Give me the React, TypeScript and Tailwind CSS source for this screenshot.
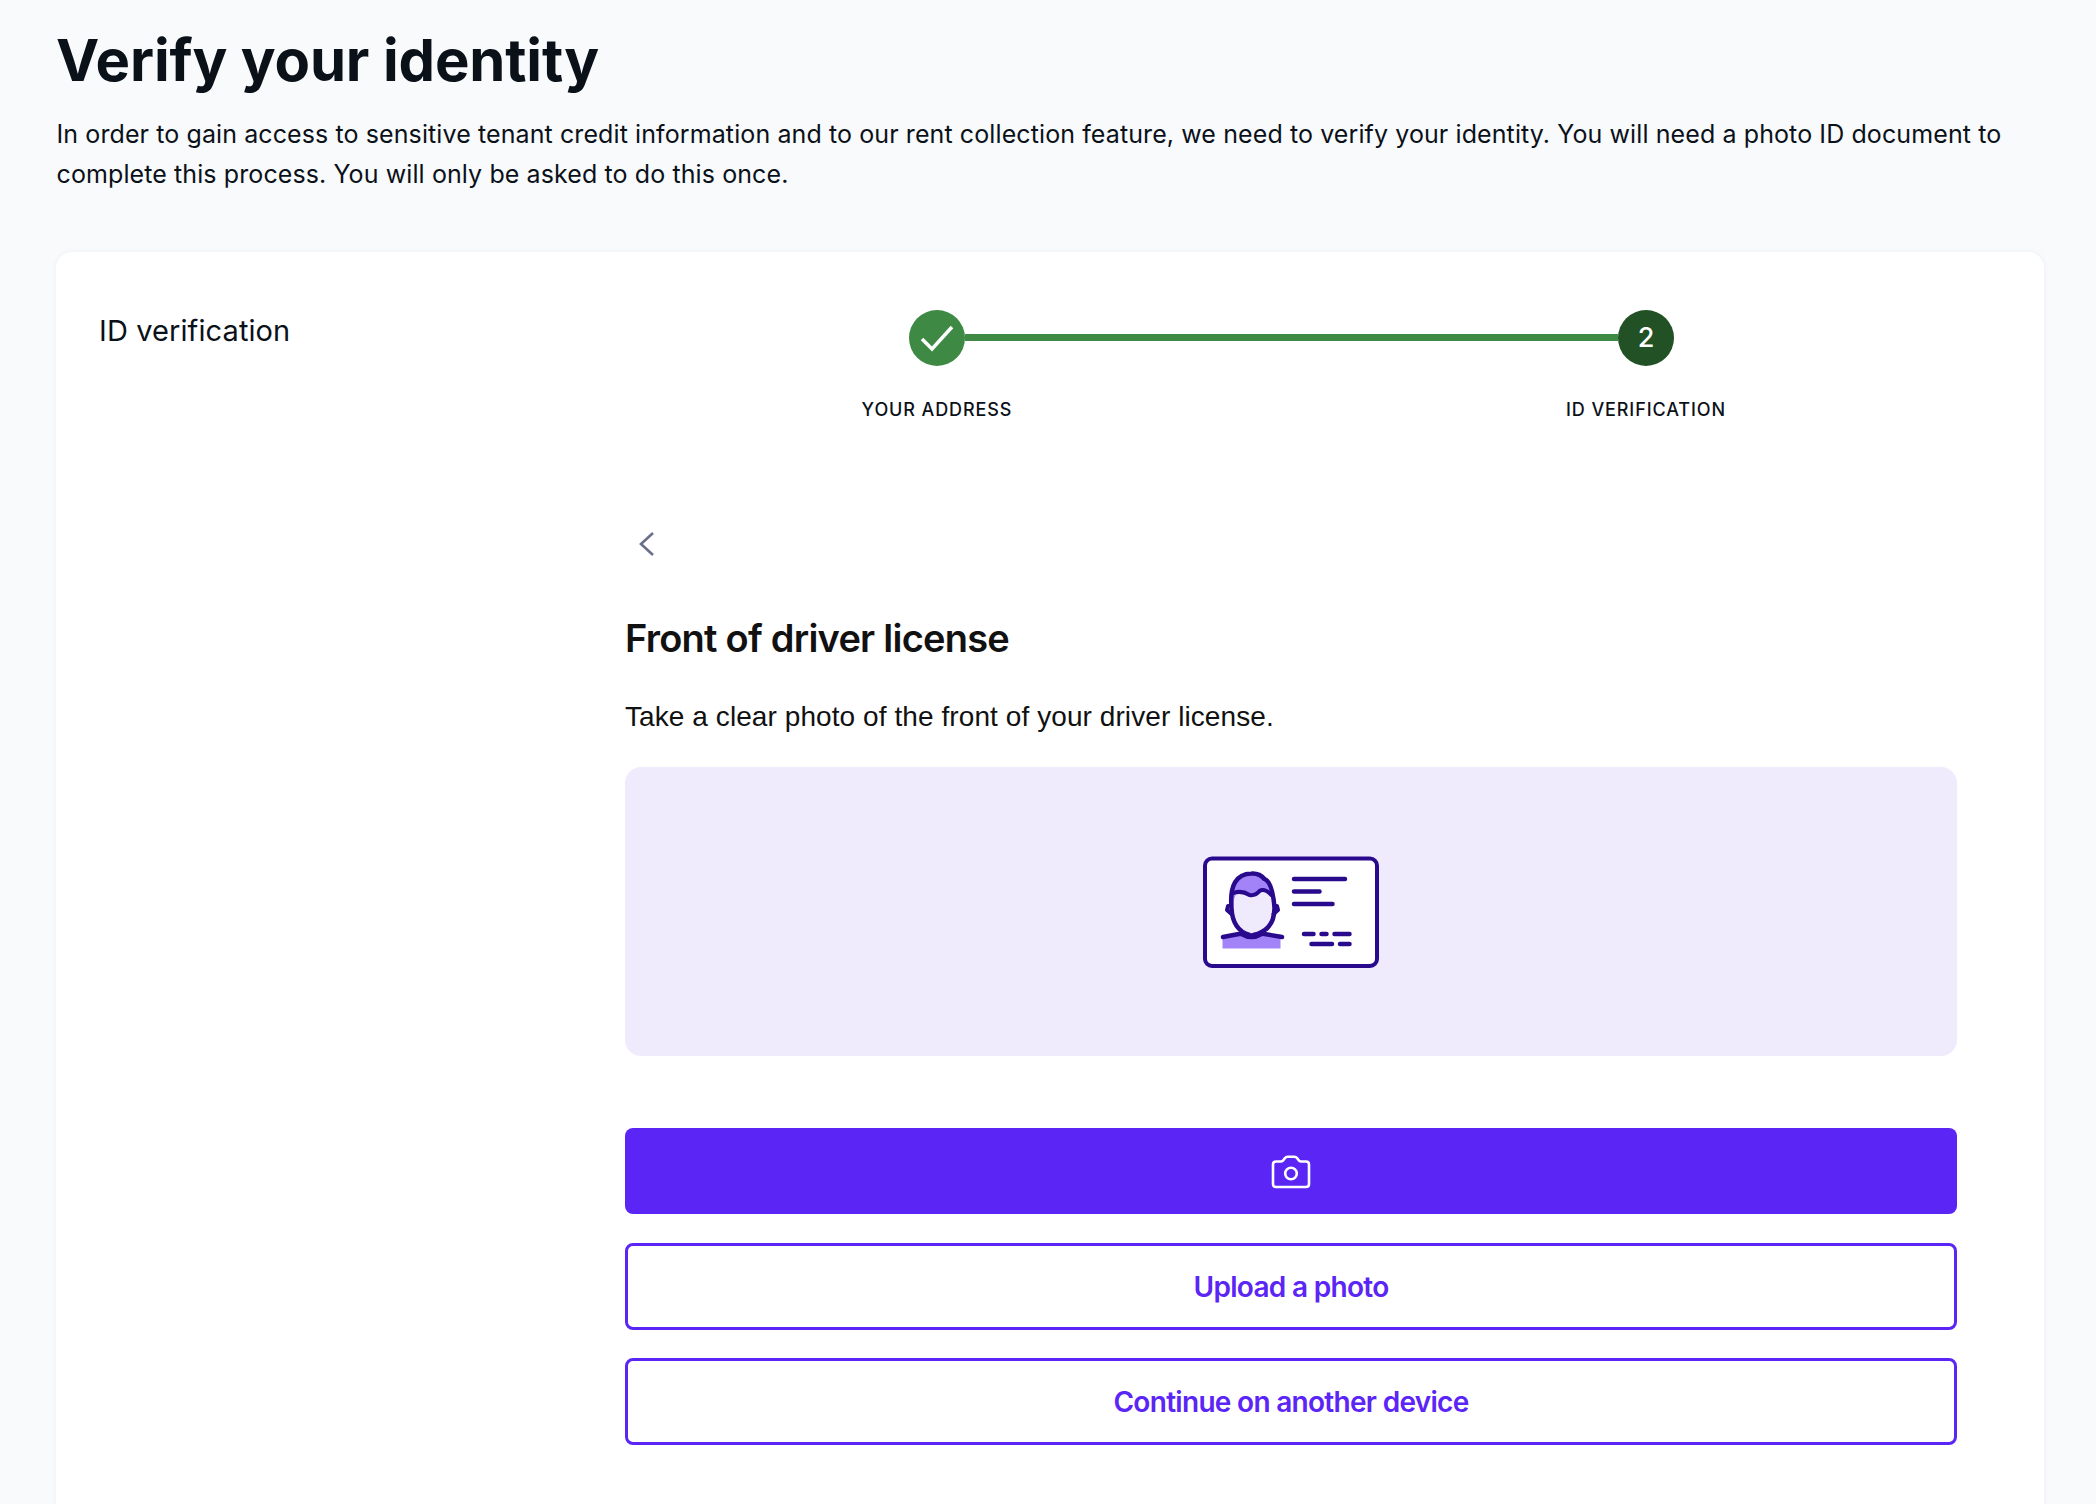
import React from "react";

function IdIcon() {
  const s = "#2a0a8c";
  return (
    <svg width="220" height="140" viewBox="1.5 2 220 140" fill="none">
      <rect x="25.5" y="18.5" width="172" height="107.5" rx="7" fill="#fff" stroke={s} strokeWidth="4" />
      <path d="M43 98 L62 94 Q72 100 82 94 L101 98 V108.5 H43 Z" fill="#a384f8" />
      <path d="M51 66 Q49 34 72 33.5 Q80 33 85 39 Q93 42 95 66 Z" fill="#a384f8" />
      <path d="M54 68 Q54 55 58 53 Q64 51 70 55 Q76 56 80 51 Q85 48 90 55 Q94 60 93 70 Q90 92 72 94 Q55 90 54 68 Z" fill="#f0ebfc" />
      <path d="M52 68 Q49 34 72 33.5 Q80 33 85 39 Q93 42 95 68 Q95 90 74 95 Q72 96 70 95 Q53 90 52 68 Z" stroke={s} strokeWidth="4.5" strokeLinejoin="round" />
      <path d="M54 53 Q62 50 70 55 Q76 56 80 51 Q85 48 92 55" stroke={s} strokeWidth="4" strokeLinecap="round" />
      <path d="M48.5 66 L47.5 70 L52 74 M97.5 66 L98.5 70 L94 74" stroke={s} strokeWidth="4" strokeLinecap="round" strokeLinejoin="round" />
      <path d="M43.5 97 L62 93.5 M82 93.5 L102.5 97 M62 94 Q72 100 82 94" stroke={s} strokeWidth="4.5" strokeLinecap="round" />
      <path d="M114.5 39 H165.5 M114.5 51.5 H140 M114.5 64 H153 M124.5 94 H134 M142 94 H147 M155 94 H170 M132 104 H152.5 M160.5 104 H170" stroke={s} strokeWidth="4.5" strokeLinecap="round" />
    </svg>
  );
}

function CameraIcon() {
  return (
    <svg className="mt-[1px]" width="40" height="34" viewBox="0 0 40 34" fill="none" stroke="#fff" strokeWidth="2.6" strokeLinejoin="round">
      <path d="M5 6.5 H10 Q11.5 6.5 12.5 5 L14 3 Q15 1.7 16.5 1.7 H23.5 Q25 1.7 26 3 L27.5 5 Q28.5 6.5 30 6.5 H35 Q38 6.5 38 9.5 V29 Q38 32 35 32 H5 Q2 32 2 29 V9.5 Q2 6.5 5 6.5 Z" />
      <circle cx="20" cy="18.5" r="5.8" />
    </svg>
  );
}

export default function App() {
  return (
    <div className="h-[1504px] overflow-hidden bg-[#f9fafc] px-[56px] text-[#0b1119] font-['Inter',sans-serif]">
      <h1 className="pt-[24px] text-[58px] leading-[72px] font-bold tracking-[-0.15px]">Verify your identity</h1>
      <p className="mt-[18px] ml-[0.5px] text-[25px] leading-[40px] tracking-[0.1px]">
        In order to gain access to sensitive tenant credit information and to our rent collection feature, we need to verify your identity. You will need a photo ID document to complete this process. You will only be asked to do this once.
      </p>
      <div className="mt-[58px] flex w-[1988px] rounded-t-[16px] bg-white shadow-[0_0_6px_rgba(30,40,80,0.05)] pt-[57px] pb-[80px]">
        <div className="w-[569px] pl-[43px] text-[29px] leading-[44px] tracking-[0.1px]">ID verification</div>
        <div className="w-[1332px]">
          <div className="flex h-[57px] items-center pl-[284px]">
            <div className="flex h-[56px] w-[56px] items-center justify-center rounded-full bg-[#3e8a45]">
              <svg width="56" height="56" viewBox="0 0 56 56" fill="none" stroke="#fff" strokeWidth="3.5">
                <path d="M13 29 L23 39 L43 17" />
              </svg>
            </div>
            <div className="h-[7px] w-[653px] bg-[#3e8a45]" />
            <div className="flex h-[56px] w-[56px] items-center justify-center rounded-full bg-[#215125] pt-[1px] text-[27px] font-medium text-white">2</div>
          </div>
          <div className="mt-[31px] flex pl-[212px] text-[18px] leading-[26px] font-medium tracking-[0.05em]">
            <div className="w-[200px] text-center">YOUR ADDRESS</div>
            <div className="ml-[509px] w-[200px] text-center">ID VERIFICATION</div>
          </div>
          <svg className="mt-[106px] ml-[8px]" width="30" height="30" viewBox="0 0 30 30" fill="none" stroke="#6b6f8a" strokeWidth="2.6">
            <path d="M20 4 L8 15 L20 26" />
          </svg>
          <h2 className="mt-[53px] text-[38px] leading-[52px] font-semibold tracking-[-0.02em] text-[#111]">Front of driver license</h2>
          <p className="mt-[33px] font-['Liberation_Sans',sans-serif] text-[28px] leading-[40px] tracking-[0.08px] text-[#111]">Take a clear photo of the front of your driver license.</p>
          <div className="mt-[30px] flex h-[289px] items-center justify-center rounded-[16px] bg-[#f0ebfc]">
            <IdIcon />
          </div>
          <button className="mt-[72px] flex h-[86px] w-full items-center justify-center rounded-[8px] bg-[#5b25f5]">
            <CameraIcon />
          </button>
          <button className="mt-[29px] flex h-[87px] w-full items-center justify-center rounded-[8px] border-[3px] border-[#5b25f5] bg-white text-[28px] font-semibold tracking-[-0.025em] text-[#5b25f5]">Upload a photo</button>
          <button className="mt-[28px] flex h-[87px] w-full items-center justify-center rounded-[8px] border-[3px] border-[#5b25f5] bg-white text-[28px] font-semibold tracking-[-0.025em] text-[#5b25f5]">Continue on another device</button>
        </div>
      </div>
    </div>
  );
}
